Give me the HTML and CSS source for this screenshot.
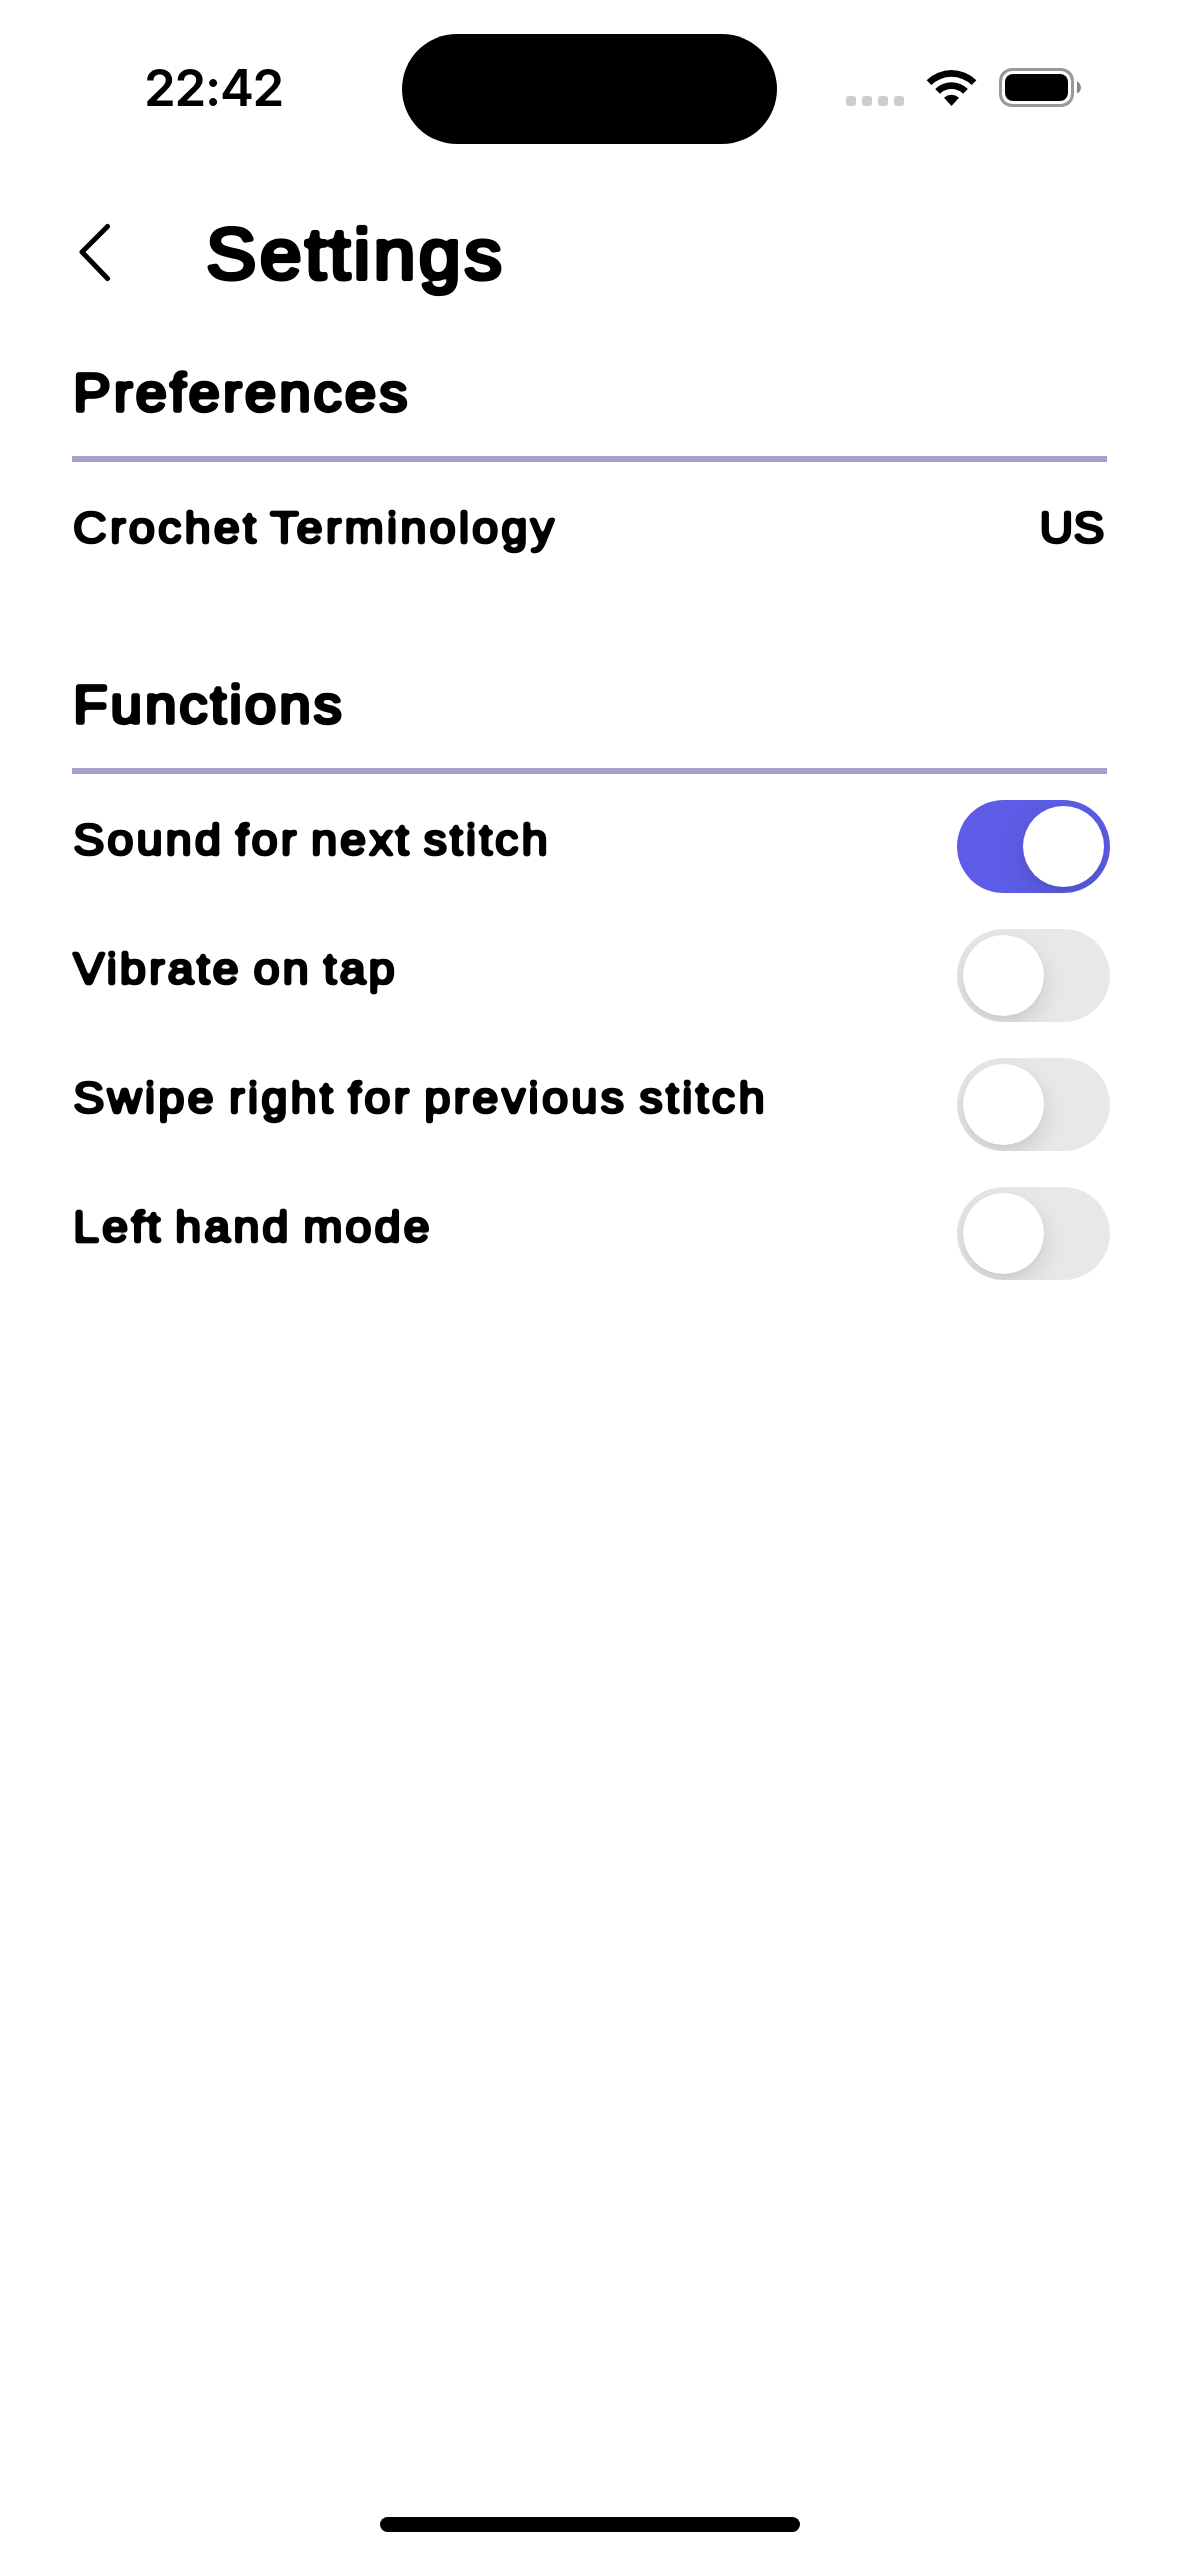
FILE: index.html
```html
<!DOCTYPE html>
<html lang="en">
<head>
<meta charset="utf-8">
<title>Settings</title>
<link rel="stylesheet" href="styles.css">
</head>
<body>
<svg class="defs" width="0" height="0" aria-hidden="true">
  <filter id="round" x="-5%" y="-10%" width="110%" height="120%">
    <feGaussianBlur stdDeviation="1.6"/>
    <feComponentTransfer><feFuncA type="linear" slope="4" intercept="-1.4"/></feComponentTransfer>
  </filter>
</svg>
<div class="screen">
  <header class="status">
    <span class="time">22:42</span>
    <div class="island"></div>
    <div class="indicators">
      <div class="dots"><i></i><i></i><i></i><i></i></div>
      <svg class="wifi" width="51" height="38" viewBox="0 0 51 38">
        <path d="M.6 11.2a35.6 35.6 0 0 1 49.8 0L45.6 16a28.8 28.8 0 0 0-40.2 0z"/>
        <path d="M9.200 19.900a23.400 23.400 0 0 1 32.600 0L37 24.700a16.600 16.600 0 0 0-23 0z"/>
        <path d="M18 28.700a10.900 10.900 0 0 1 15 0L25.500 37z"/>
      </svg>
      <svg class="battery" width="83" height="40" viewBox="0 0 83 40">
        <rect x="1.500" y="1.500" width="72" height="36" rx="11.500" fill="none" stroke="#999" stroke-width="3"/>
        <rect x="6" y="6" width="63" height="27" rx="8"/>
        <path d="M78 13.500c5.300 2 5.300 10 0 12z" fill="#888"/>
      </svg>
    </div>
  </header>
  <div class="titlebar">
    <svg class="back" width="36" height="60" viewBox="0 0 36 60"><path d="M31.500 4.500L6 30l25.500 26.500"/></svg>
    <h1 class="text title">Settings</h1>
  </div>
  <main class="content">
    <section class="group">
      <div class="section-head"><h2 class="text heading">Preferences</h2></div>
      <div class="row"><span class="text label terminology">Crochet Terminology</span><span class="text label value">US</span></div>
    </section>
    <section class="group">
      <div class="section-head"><h2 class="text heading">Functions</h2></div>
      <div class="row"><span class="text label">Sound for next stitch</span><div class="toggle on"></div></div>
      <div class="row"><span class="text label">Vibrate on tap</span><div class="toggle"></div></div>
      <div class="row"><span class="text label swipe">Swipe right for previous stitch</span><div class="toggle"></div></div>
      <div class="row"><span class="text label">Left hand mode</span><div class="toggle"></div></div>
    </section>
  </main>
  <div class="home"></div>
</div>
</body>
</html>
```
FILE: styles.css
```css
* { box-sizing: border-box; }
body { margin: 0; background: #fff; color: #000; }
.defs { display: block; }
.screen {
  width: 1179px;
  height: 2556px;
  display: flex;
  flex-direction: column;
  overflow: hidden;
}
.status {
  height: 178px;
  flex: none;
  display: grid;
  grid-template-columns: 402px 375px 1fr;
  align-items: start;
}
.time {
  padding: 57px 0 0 144px;
  font: 600 51px/62px Inter, "Liberation Sans", sans-serif;
  letter-spacing: -1.3px;
}
.island { height: 110px; margin-top: 34px; border-radius: 55px; background: #000; }
.indicators { display: flex; padding: 68px 0 0 69px; height: 108px; }
.dots { display: flex; gap: 6px; padding-top: 28px; width: 80px; }
.dots i { width: 10px; height: 10px; border-radius: 3px; background: #ccc; }
.wifi { margin-top: 1px; }
.battery { margin-left: 22px; }
.titlebar { display: flex; height: 164px; flex: none; padding-left: 76px; }
.back { margin-top: 43.5px; fill: none; stroke: #000; stroke-width: 5; stroke-linecap: round; stroke-linejoin: round; }
.text {
  margin: 0;
  font-family: "Liberation Sans", Arial, sans-serif;
  font-weight: 400;
  white-space: nowrap;
  filter: url(#round);
  transform: scaleX(1.05);
  transform-origin: left;
}
.title {
  margin: 36px 0 0 94px;
  font-size: 72px;
  line-height: 80px;
  letter-spacing: 3.1px;
  -webkit-text-stroke: 4px #000;
}
.content { padding: 0 72px; flex: 1; }
.group { height: 312px; }
.section-head {
  display: flex;
  height: 120px;
  padding: 19px 0 0 1px;
  border-bottom: 6px solid #a4a2cc;
}
.heading {
  font-size: 54px;
  line-height: 62px;
  height: 64px;
  letter-spacing: 2.75px;
  -webkit-text-stroke: 3.3px #000;
}
.row { display: flex; justify-content: space-between; height: 129px; padding: 26px 0 0 1px; }
.label {
  height: 78px;
  font-size: 45px;
  line-height: 79px;
  letter-spacing: 2.7px;
  word-spacing: -4px;
  -webkit-text-stroke: 2.6px #000;
}
.terminology { letter-spacing: 2.8px; }
.swipe { letter-spacing: 2.9px; }
.value { margin-right: 2px; letter-spacing: 0; transform: scaleX(1.04); transform-origin: right; }
.toggle {
  width: 153px;
  height: 93px;
  margin-right: -3px;
  padding: 6px;
  border-radius: 47px;
  background: #e8e8ea;
  overflow: hidden;
  display: flex;
}
.toggle::before {
  content: "";
  width: 81px;
  height: 81px;
  border-radius: 50%;
  background: #fff;
  box-shadow: 0 9px 24px rgba(0, 0, 0, .13), 0 2px 4px rgba(0, 0, 0, .03);
}
.on { background: #5d5ce6; justify-content: flex-end; }
.home { width: 420px; height: 15px; flex: none; margin: 0 auto 24px; border-radius: 8px; background: #000; }
```
